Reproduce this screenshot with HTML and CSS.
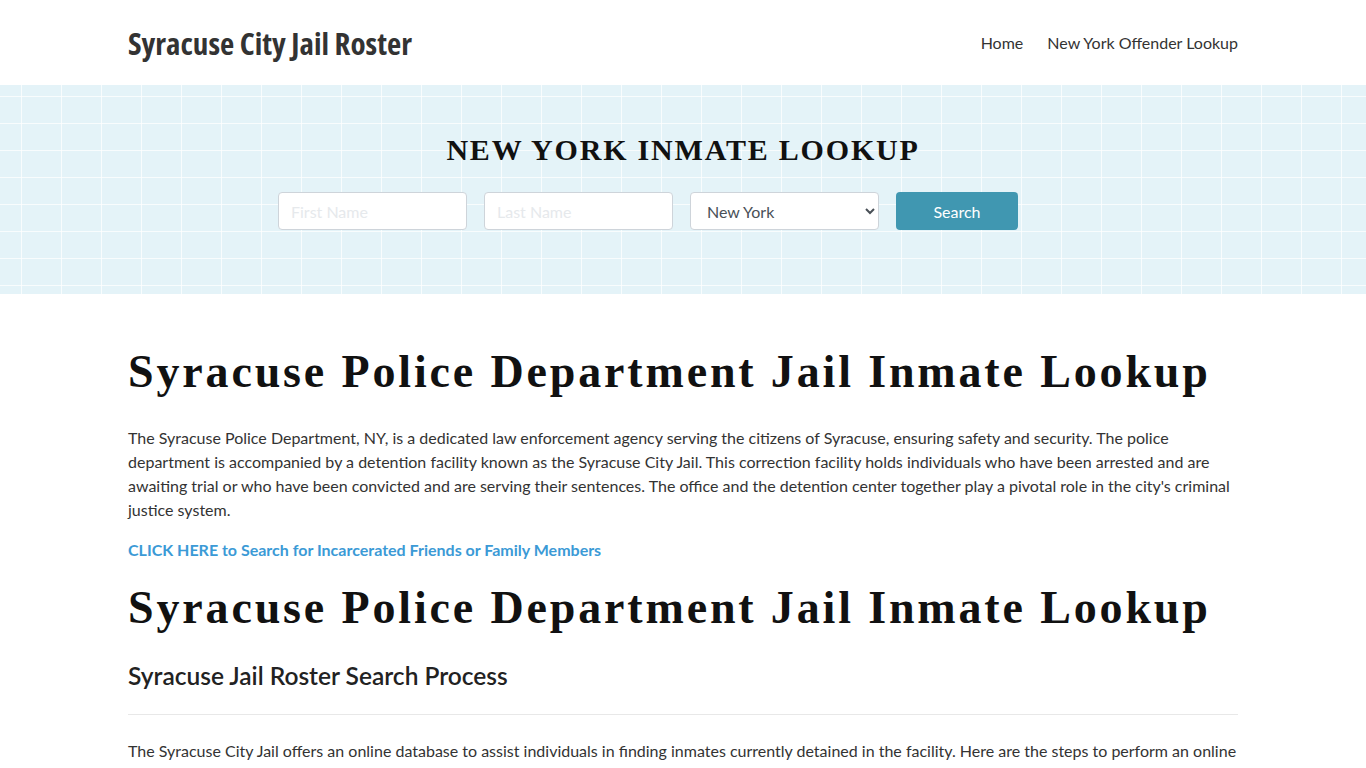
FILE: index.html
```html
<!DOCTYPE html>
<html lang="en">
<head>
<meta charset="utf-8">
<title>Syracuse City Jail Roster</title>
<link rel="stylesheet" href="styles.css">
</head>
<body>
<header class="site-header">
  <div class="container header-row">
    <a class="logo" href="#">Syracuse City Jail Roster</a>
    <nav class="nav">
      <a href="#">Home</a>
      <a href="#">New York Offender Lookup</a>
    </nav>
  </div>
</header>
<section class="hero">
  <h2 class="hero-title">NEW YORK INMATE LOOKUP</h2>
  <form class="search-form">
    <input class="field" type="text" placeholder="First Name">
    <input class="field" type="text" placeholder="Last Name">
    <select class="field select">
      <option>New York</option>
    </select>
    <button class="btn" type="button">Search</button>
  </form>
</section>
<main class="container content">
  <h1 class="title">Syracuse Police Department Jail Inmate Lookup</h1>
  <p class="text">The Syracuse Police Department, NY, is a dedicated law enforcement agency serving the citizens of Syracuse, ensuring safety and security. The police department is accompanied by a detention facility known as the Syracuse City Jail. This correction facility holds individuals who have been arrested and are awaiting trial or who have been convicted and are serving their sentences. The office and the detention center together play a pivotal role in the city's criminal justice system.</p>
  <p class="text"><a class="cta" href="#">CLICK HERE to Search for Incarcerated Friends or Family Members</a></p>
  <h1 class="title second">Syracuse Police Department Jail Inmate Lookup</h1>
  <h3 class="subtitle">Syracuse Jail Roster Search Process</h3>
  <hr class="divider">
  <p class="text">The Syracuse City Jail offers an online database to assist individuals in finding inmates currently detained in the facility. Here are the steps to perform an online search for an inmate in the Syracuse City Jail.</p>
</main>
</body>
</html>
```
FILE: styles.css
```css
* { box-sizing: border-box; }
html, body { margin: 0; padding: 0; }
body {
  font-family: Lato, "Liberation Sans", sans-serif;
  font-size: 16px;
  line-height: 24px;
  color: #333;
  background: #fff;
}
.container {
  width: 1110px;
  margin: 0 auto;
}
.site-header { height: 85px; background: #fff; }
.header-row {
  height: 85px;
  display: flex;
  align-items: center;
  justify-content: space-between;
}
.logo {
  display: inline-block;
  font-family: "Open Sans", "Roboto", sans-serif;
  font-weight: 700;
  font-stretch: 75%;
  font-size: 31px;
  line-height: 36px;
  color: #333;
  text-decoration: none;
  letter-spacing: 0;
}
.nav { display: flex; gap: 24px; }
.nav a { color: #333; text-decoration: none; font-size: 16px; }

.hero {
  height: 209px;
  background-color: #e4f3f8;
  background-image:
    linear-gradient(90deg, rgba(255,255,255,0.75) 1.5px, transparent 1.5px),
    linear-gradient(180deg, rgba(255,255,255,0.75) 1.5px, transparent 1.5px);
  background-size: 40px 27px;
  background-position: 21px 11px;
  padding-top: 48px;
  text-align: center;
}
.hero-title {
  margin: 0 0 25px;
  font-family: "Liberation Serif", "DejaVu Serif", serif;
  font-weight: 700;
  font-size: 30px;
  line-height: 34px;
  letter-spacing: 1.8px;
  color: #111;
}
.search-form {
  display: flex;
  justify-content: center;
  gap: 17px;
  padding-right: 70px;
}
.field {
  width: 189px;
  height: 38px;
  border: 1px solid #ced4da;
  border-radius: 4px;
  background: #fff;
  padding: 0 12px;
  font-family: Lato, sans-serif;
  font-size: 16px;
  color: #495057;
}
.field::placeholder { color: #e6e9ec; }
.select { padding: 0 8px 0 12px; }
.btn {
  width: 122px;
  height: 38px;
  border: none;
  border-radius: 4px;
  background: #4097b1;
  color: #fff;
  font-family: Lato, sans-serif;
  font-size: 16px;
}
.content { padding-top: 52px; }
.title {
  margin: 0 0 28px;
  font-family: "Liberation Serif", "DejaVu Serif", serif;
  font-weight: 700;
  font-size: 46px;
  line-height: 52px;
  letter-spacing: 2.85px;
  color: #111;
}
.title.second { margin: 20px 0 27px; }
.text { margin: 0 0 16px; }
.cta { color: #3b9ad6; font-weight: 700; text-decoration: none; }
.subtitle {
  margin: 0;
  font-size: 24.5px;
  line-height: 30px;
  font-weight: 600;
  color: #222;
}
.divider {
  border: 0;
  border-top: 1px solid #e8e8e8;
  margin: 23px 0 24px;
}
```
